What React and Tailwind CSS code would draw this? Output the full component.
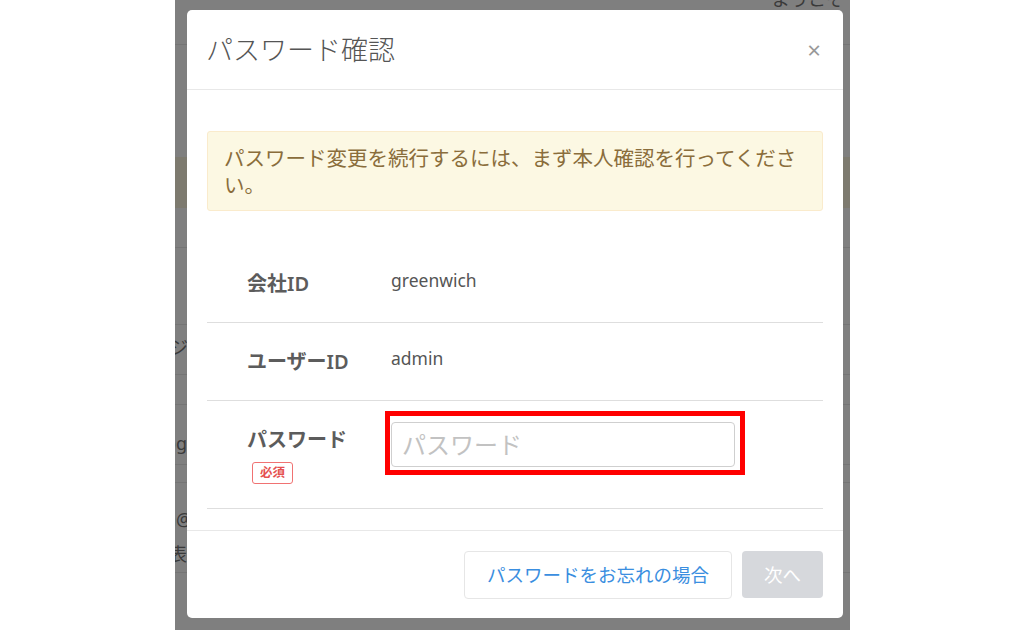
export default function App() {
  return (
    <div className="w-[1024px] h-[630px] bg-white overflow-hidden font-['Noto_Sans','Noto_Sans_CJK_JP',sans-serif]">
      {/* backdrop + dimmed page behind */}
      <div className="relative ml-[175px] w-[675px] h-full bg-[#7f7f7f] overflow-hidden">
        <div className="flex flex-col text-[#3a3a3a] text-[18px]">
          <div className="h-[45px] border-b border-[#747474] pl-[597px]">
            <span className="block -mt-[12px] leading-[22px]">ようこそ</span>
          </div>
          <div className="h-[112px]" />
          <div className="h-[51px] bg-[#7d7a6f]" />
          <div className="h-[40px] border-b border-[#747474]" />
          <div className="h-[77px] border-b border-[#747474]" />
          <div className="h-[50px] border-b border-[#747474] -ml-[5px] pt-[12px] leading-[20px]">ジ</div>
          <div className="h-[30px] border-b border-[#747474]" />
          <div className="h-[60px] border-b border-[#747474] -ml-[10px] pt-[28px] leading-[20px]">og</div>
          <div className="h-[18px] border-b border-[#747474]" />
          <div className="h-[55px] -ml-[10px] pt-[26px] leading-[20px]">n@</div>
          <div className="h-[35px] border-b border-[#747474] -ml-[6px] pt-[6px] leading-[20px]">表</div>
        </div>

        {/* modal */}
        <div className="absolute left-[12px] top-[10px] w-[656px] h-[608px] bg-white rounded-[5px] flex flex-col">
          <div className="h-[80px] flex items-center justify-between pl-[19px] pr-[22px] border-b border-[#e8e8e8]">
            <h2 className="text-[27px] font-light text-[#555] leading-none">パスワード確認</h2>
            <span className="text-[24px] text-[#999] leading-none">×</span>
          </div>

          <div className="px-[20px] pt-[41px] pb-[21px]">
            <div className="h-[80px] border border-[#faebcc] bg-[#fcf8e3] rounded-[3px] px-[16px] pt-[13px] text-[20.5px] leading-[27px] text-[#8a6d3b]">
              パスワード変更を続行するには、まず本人確認を行ってくださ<br />い。
            </div>

            <div className="mt-[34px]">
              <div className="h-[78px] flex border-b border-[#dedede] pl-[40px]">
                <div className="w-[144px] pt-[25px] text-[20px] leading-[28px] font-semibold text-[#5c5c5c]">会社ID</div>
                <div className="pt-[23px] text-[17.5px] leading-[24px] text-[#555]">greenwich</div>
              </div>
              <div className="h-[78px] flex border-b border-[#dedede] pl-[40px]">
                <div className="w-[144px] pt-[25px] text-[20px] leading-[28px] font-semibold text-[#5c5c5c]">ユーザーID</div>
                <div className="pt-[23px] text-[17.5px] leading-[24px] text-[#555]">admin</div>
              </div>
              <div className="h-[108px] flex border-b border-[#dedede] pl-[40px]">
                <div className="w-[138px] pt-[25px] flex flex-col items-start">
                  <span className="text-[20px] leading-[28px] font-semibold text-[#5c5c5c]">パスワード</span>
                  <span className="mt-[8px] ml-[5px] w-[41px] h-[22px] flex items-center justify-center border-[1.5px] border-[#f07272] rounded-[3px] text-[12.5px] font-bold text-[#e5504f] leading-none">必須</span>
                </div>
                <div className="mt-[10px] w-[360px] h-[64px] border-[5px] border-[#ff0000] pl-[1px] pt-[6px]">
                  <input
                    type="password"
                    placeholder="パスワード"
                    className="w-[344px] h-[45px] border border-[#cfcfcf] rounded-[4px] pl-[10px] text-[24px] text-[#555] placeholder:text-[#c2c2c2] outline-none"
                  />
                </div>
              </div>
            </div>
          </div>

          <div className="border-t border-[#e8e8e8] px-[20px] pt-[20px] flex justify-end gap-[10px]">
            <button className="w-[268px] h-[48px] border border-[#e6e6e6] rounded-[4px] bg-white text-[18.5px] text-[#3a8ee0]">
              パスワードをお忘れの場合
            </button>
            <button className="w-[81px] h-[47px] rounded-[4px] bg-[#d6d8dc] text-[18.5px] text-white">
              次へ
            </button>
          </div>
        </div>
      </div>
    </div>
  );
}
